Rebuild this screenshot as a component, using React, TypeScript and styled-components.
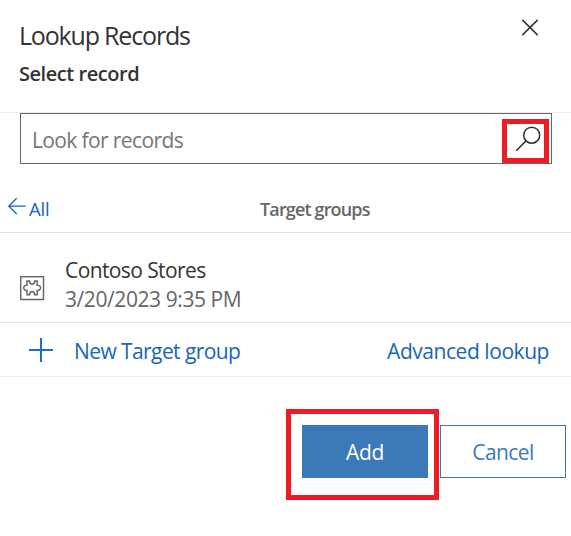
import React from "react";
import styled, { createGlobalStyle } from "styled-components";

const GlobalStyle = createGlobalStyle`
  *, *::before, *::after { box-sizing: border-box; }
  body { margin: 0; background: #fff; }
  button, input { font-family: inherit; margin: 0; padding: 0; }
`;

const Panel = styled.main`
  width: 571px;
  height: 536px;
  overflow: hidden;
  background: #fff;
  font-family: "Open Sans", "Segoe UI", sans-serif;
  color: #333;
`;

const Header = styled.header`
  display: flex;
  justify-content: space-between;
  height: 113px;
  padding: 18px 32px 0 19px;
  border-bottom: 1px solid #ededed;
`;

const Title = styled.h1`
  margin: 0;
  font-size: 25px;
  font-weight: 400;
  line-height: 34px;
  letter-spacing: -1.18px;
  white-space: nowrap;
`;

const Subtitle = styled.h2`
  margin: 8px 0 0;
  font-size: 20px;
  font-weight: 600;
  line-height: 28px;
  letter-spacing: -0.45px;
  white-space: nowrap;
`;

const CloseButton = styled.button`
  width: 18px;
  height: 18px;
  border: 0;
  background: none;
  svg { display: block; }
`;

const SearchBox = styled.div`
  display: flex;
  width: 532px;
  height: 51px;
  margin-left: 20px;
  border: 1px solid #666;
`;

const SearchInput = styled.input`
  flex: 1;
  min-width: 0;
  padding: 3px 0 0 11px;
  border: 0;
  outline: 0;
  background: none;
  font-size: 21px;
  letter-spacing: -0.62px;
  &::placeholder { color: #767676; opacity: 1; }
`;

const SearchButton = styled.button`
  width: 47px;
  height: 44px;
  margin: 5px 2px 0 0;
  border: 5px solid #ed1c24;
  background: none;
  svg { display: block; }
`;

const GroupBar = styled.nav`
  display: grid;
  grid-template-columns: 260px 1fr;
  height: 69px;
  padding-top: 31px;
  border-bottom: 1px solid #e1e1e1;
`;

const BackLink = styled.a`
  display: flex;
  padding-left: 8px;
  color: #1664c0;
  font-size: 18.5px;
  line-height: 28px;
  letter-spacing: -0.2px;
  svg { margin: 3px 3px 0 0; }
`;

const GroupTitle = styled.strong`
  color: #666;
  font-size: 18px;
  font-weight: 600;
  line-height: 28px;
  letter-spacing: -0.85px;
`;

const Record = styled.div`
  display: flex;
  height: 90px;
  padding: 23px 0 0 20px;
  border-bottom: 1px solid #e1e1e1;
  svg { margin: 20px 20px 0 0; }
`;

const RecordText = styled.div`
  font-size: 21px;
  line-height: 29px;
  white-space: nowrap;
`;

const RecordName = styled.div`
  letter-spacing: -0.6px;
`;

const RecordDate = styled.div`
  color: #666;
  letter-spacing: -0.42px;
`;

const Actions = styled.div`
  display: flex;
  justify-content: space-between;
  align-items: center;
  height: 54px;
  padding: 0 22px 0 29px;
  border-bottom: 1px solid #ededed;
`;

const ActionLink = styled.a<{ $tracking: number }>`
  display: flex;
  align-items: center;
  gap: 21px;
  color: #1664c0;
  font-size: 21px;
  line-height: 28px;
  letter-spacing: ${(p) => p.$tracking}px;
  white-space: nowrap;
`;

const ActionLabel = styled.span`
  padding-top: 2px;
`;

const Footer = styled.footer`
  display: flex;
  gap: 1px;
  padding: 32px 5px 0 286px;
`;

const Highlight = styled.div`
  width: 153px;
  height: 91px;
  padding: 11px;
  border: 5px solid #ed1c24;
`;

const Button = styled.button<{ $primary?: boolean }>`
  width: 126px;
  height: 53px;
  margin-top: ${(p) => (p.$primary ? 0 : 16)}px;
  border: 1px solid #3b79b7;
  background: ${(p) => (p.$primary ? "#3b79b7" : "#fff")};
  color: ${(p) => (p.$primary ? "#fff" : "#3b79b7")};
  font-size: 21px;
  line-height: 28px;
  letter-spacing: ${(p) => (p.$primary ? -0.3 : -0.6)}px;
`;

const CloseIcon = () => (
  <svg width="18" height="18" viewBox="0 0 18 18" fill="none" stroke="#333" strokeWidth="1.5">
    <path d="M1.3 1.9 16.7 17.1M16.7 1.9 1.3 17.1" />
  </svg>
);

const SearchIcon = () => (
  <svg width="37" height="34" viewBox="0 0 37 34" fill="none" stroke="#333" strokeWidth="1.5">
    <circle cx="24.7" cy="11.2" r="8" />
    <path d="M19 16.9 9.2 26.7" />
  </svg>
);

const BackIcon = () => (
  <svg width="18" height="18" viewBox="0 0 18 18" fill="none" stroke="#1664c0" strokeWidth="1.3">
    <path d="M17.8 8.1H.8M8.7.2.8 8.1l7.9 7.9" />
  </svg>
);

const EntityIcon = () => (
  <svg width="25" height="25" viewBox="0 0 25 25" fill="none" stroke="#666" strokeWidth="1.5">
    <rect x=".7" y=".7" width="22.8" height="22.8" />
    <path d="M7 5h2.6c0 4.4 5 4.4 5 0h2.6v4.2c4.4-.7 4.4 5.9 0 5.2v4.3h-2.6c0-4.4-5-4.4-5 0H7v-4.3c-4.4.7-4.4-5.9 0-5.2Z" />
  </svg>
);

const PlusIcon = () => (
  <svg width="24" height="24" viewBox="0 0 24 24" fill="none" stroke="#1b6cc4" strokeWidth="2">
    <path d="M12 0v24M0 12h24" />
  </svg>
);

export default function App() {
  return (
    <>
      <GlobalStyle />
      <Panel>
        <Header>
          <div>
            <Title>Lookup Records</Title>
            <Subtitle>Select record</Subtitle>
          </div>
          <CloseButton aria-label="Close"><CloseIcon /></CloseButton>
        </Header>
        <SearchBox>
          <SearchInput placeholder="Look for records" />
          <SearchButton aria-label="Search"><SearchIcon /></SearchButton>
        </SearchBox>
        <GroupBar>
          <BackLink><BackIcon />All</BackLink>
          <GroupTitle>Target groups</GroupTitle>
        </GroupBar>
        <Record>
          <EntityIcon />
          <RecordText>
            <RecordName>Contoso Stores</RecordName>
            <RecordDate>3/20/2023 9:35 PM</RecordDate>
          </RecordText>
        </Record>
        <Actions>
          <ActionLink $tracking={-0.58}><PlusIcon /><ActionLabel>New Target group</ActionLabel></ActionLink>
          <ActionLink $tracking={-0.45}><ActionLabel>Advanced lookup</ActionLabel></ActionLink>
        </Actions>
        <Footer>
          <Highlight>
            <Button $primary>Add</Button>
          </Highlight>
          <Button>Cancel</Button>
        </Footer>
      </Panel>
    </>
  );
}
